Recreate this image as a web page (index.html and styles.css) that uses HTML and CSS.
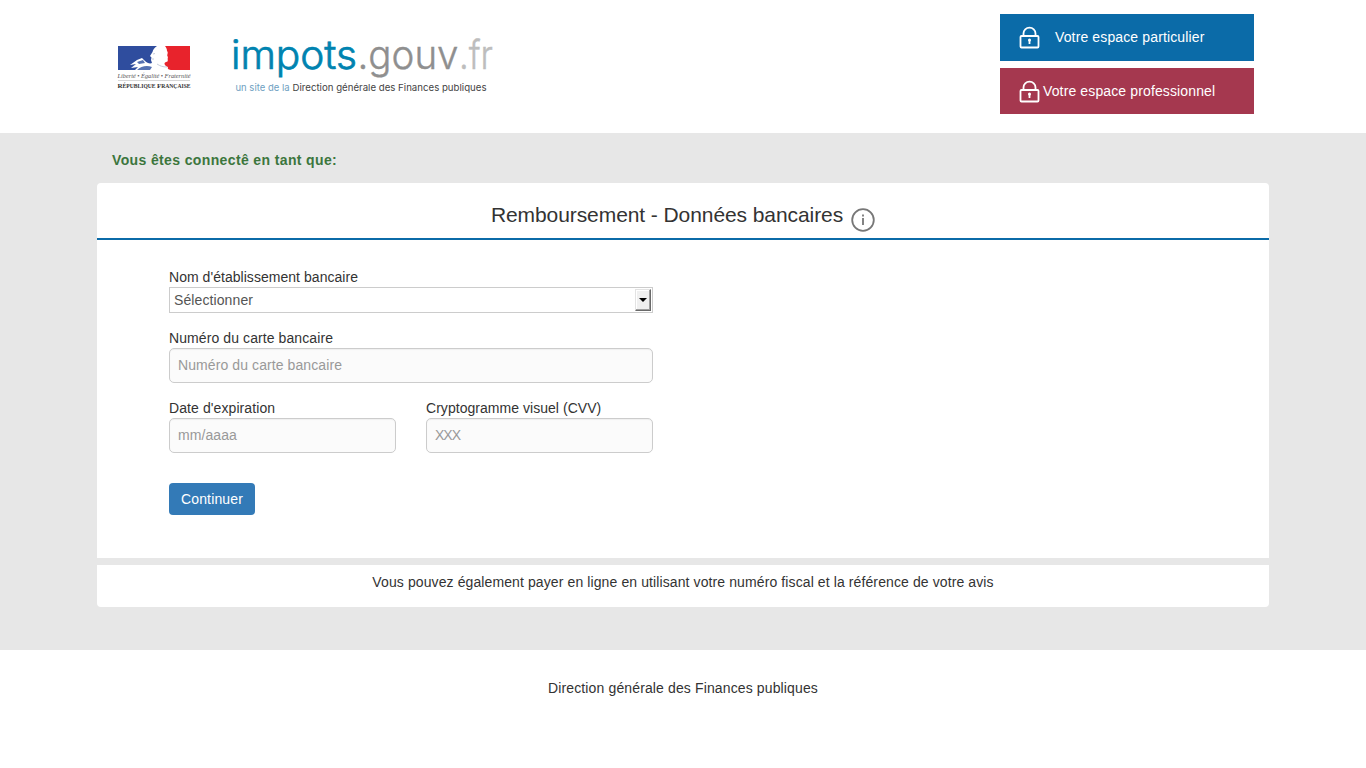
FILE: index.html
```html
<!DOCTYPE html>
<html lang="fr">
<head>
<meta charset="utf-8">
<title>Données bancaires (maquette statique)</title>
<link rel="stylesheet" href="styles.css">
</head>
<body>
<header class="header">
  <div class="logos">
    <svg class="marianne" width="74" height="44" viewBox="0 0 74 44">
      <rect x="1" y="0" width="72" height="25" fill="#fff"/>
      <path d="M1 0H40C37 2 36 4 35.500 6L33 10L34.500 11.500L34 14L35 17C33 18 30 17 28 15L25 12L20 14L13 19L19 18L14 22L21 21L18 24H1Z" fill="#2f4d9e"/>
      <path d="M48 0H73V24H55C52 24 50 23 51 21C48 20 46 17 49 16C52 16 50 13 51 11C49 9 52 7 50 5C50 3 49 1 48 0Z" fill="#e8232c"/>
      <path d="M20 24C24 20 30 19 35 21L33 24ZM20 16L26 14L28 17L22 18Z" fill="#5672b2"/>
      <path d="M36 8L38 7.500M35 13L37 13M40 18C43 20 46 21 50 21" stroke="#b8bfd0" stroke-width=".8" fill="none"/>
      <text x="0.500" y="32" textLength="73" lengthAdjust="spacingAndGlyphs" class="motto">Liberté • Égalité • Fraternité</text>
      <path d="M1 34.500H73" stroke="#bbb" stroke-width=".6"/>
      <text x="0.500" y="41.800" textLength="73" lengthAdjust="spacingAndGlyphs" class="republic"><tspan class="cap">R</tspan>ÉPUBLIQUE <tspan class="cap">F</tspan>RANÇAISE</text>
    </svg>
    <svg class="wordmark" width="264" height="60" viewBox="0 0 264 60">
      <text class="brand teal" x="-1" y="33" textLength="126" lengthAdjust="spacingAndGlyphs">impots</text>
      <text class="brand grey" x="125.500" y="33" textLength="101" lengthAdjust="spacingAndGlyphs">.gouv</text>
      <text class="brand pale" x="227" y="33" textLength="34" lengthAdjust="spacingAndGlyphs">.fr</text>
      <text class="tagline sky" x="3.500" y="55" textLength="54" lengthAdjust="spacingAndGlyphs">un site de la</text>
      <text class="tagline" x="60.500" y="55" textLength="194" lengthAdjust="spacingAndGlyphs">Direction générale des Finances publiques</text>
    </svg>
  </div>
  <div class="spaces">
    <div class="space personal">
      <svg class="lock" width="21" height="23" viewBox="0 0 21 23"><path d="M4.500 10V7.500a6 5.800 0 0 1 12 0v2.500" /><rect x="1.500" y="10" width="18" height="11.500" rx="1"/><circle cx="10.500" cy="14" r="1.500" class="hole"/><path d="M10.500 14v4"/></svg>
      <span>Votre espace particulier</span>
    </div>
    <div class="space business">
      <svg class="lock" width="21" height="23" viewBox="0 0 21 23"><path d="M4.500 10V7.500a6 5.800 0 0 1 12 0v2.500" /><rect x="1.500" y="10" width="18" height="11.500" rx="1"/><circle cx="10.500" cy="14" r="1.500" class="hole"/><path d="M10.500 14v4"/></svg>
      <span>Votre espace professionnel</span>
    </div>
  </div>
</header>
<main class="main">
  <p class="connected">Vous êtes connectê en tant que:</p>
  <section class="panel">
    <div class="title">
      <span>Remboursement - Données bancaires</span>
      <svg class="info" width="24" height="24" viewBox="0 0 24 24"><circle cx="12" cy="12" r="10.800"/><path d="M12 10v7M12 6.500v2"/></svg>
    </div>
    <div class="fields">
      <div class="group">
        <div class="label">Nom d'établissement bancaire</div>
        <div class="select"><span>Sélectionner</span><span class="arrow"></span></div>
      </div>
      <div class="group card">
        <div class="label wide">Numéro du carte bancaire</div>
        <div class="field">Numéro du carte bancaire</div>
      </div>
      <div class="row">
        <div class="group">
          <div class="label wide">Date d'expiration</div>
          <div class="field">mm/aaaa</div>
        </div>
        <div class="group">
          <div class="label">Cryptogramme visuel (CVV)</div>
          <div class="field code">XXX</div>
        </div>
      </div>
      <div class="continue">Continuer</div>
    </div>
  </section>
  <div class="notice">Vous pouvez également payer en ligne en utilisant votre numéro fiscal et la référence de votre avis</div>
</main>
<footer class="footer">Direction générale des Finances publiques</footer>
</body>
</html>
```
FILE: styles.css
```css
* { box-sizing: border-box; }
body {
  margin: 0;
  font: 14px/20px "Liberation Sans", Arial, sans-serif;
  color: #333;
  background: #fff;
}
.header {
  height: 133px;
  padding: 14px 112px 0 117px;
  display: flex;
  justify-content: space-between;
}
.logos { display: flex; align-items: flex-start; }
.marianne { margin-top: 32px; overflow: visible; }
.motto { font: italic 6px "Liberation Serif", serif; fill: #555; }
.republic { font: bold 5.6px "Liberation Serif", serif; fill: #333; }
.cap { font-size: 7px; }
.wordmark { margin: 22px 0 0 41px; overflow: visible; }
.brand { font: 300 40px Inter, sans-serif; }
.teal { fill: #0083b0; stroke: #0083b0; stroke-width: .7; }
.grey { fill: #8f8f8f; stroke: #8f8f8f; stroke-width: .4; }
.pale { fill: #bdbdbd; stroke: #bdbdbd; stroke-width: .4; }
.tagline { font: 9.5px Inter, sans-serif; fill: #444; }
.tagline.sky { fill: #6f9fc2; }
.spaces { width: 254px; display: flex; flex-direction: column; gap: 7px; }
.space {
  height: 47px;
  display: flex;
  align-items: center;
  padding-left: 19px;
  color: #fff;
  letter-spacing: .13px;
}
.personal { background: #0b6ba8; gap: 15px; }
.personal span { padding-bottom: 2px; }
.business { background: #a5384f; height: 46px; gap: 3px; }
.lock { fill: none; stroke: #fff; stroke-width: 1.8; }
.lock .hole { fill: #fff; stroke: none; }
.main {
  height: 517px;
  padding: 17px 97px 0;
  background: #e7e7e7;
}
.connected {
  margin: 0 0 13px;
  padding-left: 15px;
  font-weight: bold;
  letter-spacing: .37px;
  color: #3c763d;
}
.panel { height: 375px; background: #fff; border-radius: 4px 4px 0 0; }
.title {
  height: 57px;
  padding-top: 19px;
  border-bottom: 2px solid #0b6ba8;
  display: flex;
  justify-content: center;
  gap: 8px;
  font-size: 21px;
  line-height: 26px;
  letter-spacing: -.08px;
}
.info { margin-top: 6px; fill: none; stroke: #777; stroke-width: 1.8; }
.fields { width: 556px; padding: 27px 0 0 72px; }
.label { height: 20px; letter-spacing: .04px; }
.label.wide { letter-spacing: .09px; }
.select {
  height: 26px;
  padding: 1px 1px 1px 4px;
  border: 1px solid #ccc;
  display: flex;
  justify-content: space-between;
  align-items: center;
  color: #555;
  letter-spacing: .1px;
}
.arrow {
  width: 16px;
  height: 22px;
  background: #f0f0f0;
  border: 1px solid;
  border-color: #e3e3e3 #696969 #696969 #e3e3e3;
  box-shadow: inset -1px -1px #a0a0a0, inset 1px 1px #fff;
  display: flex;
  align-items: center;
  justify-content: center;
}
.arrow::before {
  content: "";
  border: 4px solid transparent;
  border-top-color: #000;
  border-bottom: 0;
}
.card { margin: 15px 0; }
.row { display: grid; grid-template-columns: 227px 227px; gap: 30px; }
.field {
  height: 35px;
  padding: 6px 8px;
  line-height: 20px;
  border: 1px solid #ccc;
  border-radius: 5px;
  background: #fbfbfb;
  box-shadow: inset 0 1px 1px rgba(0, 0, 0, .05);
  color: #999;
  letter-spacing: .09px;
}
.field.code { letter-spacing: -1px; }
.continue {
  width: 86px;
  height: 32px;
  margin-top: 30px;
  border-radius: 4px;
  background: #337ab7;
  color: #fff;
  line-height: 32px;
  text-align: center;
  letter-spacing: .15px;
}
.notice {
  height: 42px;
  margin-top: 7px;
  padding-top: 7px;
  background: #fff;
  border-radius: 0 0 4px 4px;
  text-align: center;
  letter-spacing: .105px;
}
.footer { padding-top: 28px; text-align: center; letter-spacing: .13px; }
```
